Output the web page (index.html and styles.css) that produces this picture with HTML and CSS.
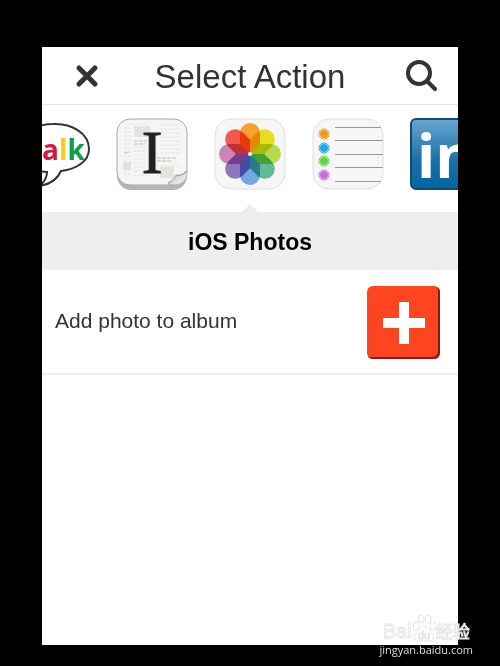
FILE: index.html
```html
<!DOCTYPE html>
<html lang="en">
<head>
    <meta charset="UTF-8">
    <meta name="viewport" content="width=device-width, initial-scale=1.0">
    <title>Select Action</title>
    <link rel="stylesheet" href="styles.css">
</head>
<body>

    <main class="screen">
        <header class="topbar">
            <button class="icon-btn" aria-label="Close">
                <svg width="24" height="24" viewBox="0 0 24 24" fill="none" stroke="#333" stroke-width="5" stroke-linecap="round">
                    <path d="M4 4L20 20M20 4L4 20"/>
                </svg>
            </button>
            <h1>Select Action</h1>
            <button class="icon-btn search" aria-label="Search">
                <svg width="32" height="32" viewBox="0 0 32 32" fill="none" stroke="#333" stroke-width="4">
                    <circle cx="13" cy="13" r="11"/>
                    <path d="M21 21L29 29" stroke-linecap="round"/>
                </svg>
            </button>
        </header>

        <nav class="channels">
            <button class="channel" aria-label="Google Talk">
                <svg viewBox="0 0 72 72">
                    <path d="M35 6C53 5 71 15 71 31C71 43 59 51 43 53C40 60 33 66 22 68C27 63 29 59 29 54C12 53 1 44 1 31C1 16 17 6 35 6Z" fill="#fff" stroke="#333" stroke-width="2"/>
                    <text class="talk-text" x="24" y="42"><tspan fill="#d9183f">a</tspan><tspan fill="#f6cf13">l</tspan><tspan fill="#0da04b">k</tspan></text>
                </svg>
            </button>
            <button class="channel" aria-label="Instapaper">
                <svg viewBox="0 0 72 72">
                    <defs>
                        <linearGradient id="curl" x1="0" y1="0" x2="1" y2="1">
                            <stop offset="0" stop-color="#fff"/>
                            <stop offset=".5" stop-color="#dededa"/>
                            <stop offset="1" stop-color="#fafafa"/>
                        </linearGradient>
                    </defs>
                    <rect x="1" y="2" width="70" height="70" rx="14" fill="#b5b5b2"/>
                    <rect x="1" y="1" width="70" height="66" rx="13" fill="#f5f5f3" stroke="#aaa"/>
                    <g stroke="#e4e4e1" stroke-dasharray="3 1">
                        <path d="M12 6H32M8 10H15M8 14H15M8 18H15M8 22H15M8 26H15M8 30H15M8 34H15M8 38H15M8 42H15M8 48H15M8 52H15M8 56H15"/>
                        <path d="M44 7H65M44 11H65M44 15H65M44 19H65M44 23H65M44 27H65M44 31H65M44 35H65"/>
                        <path d="M18 29H29M18 33H29M18 37H29M18 41H29M18 45H29M18 49H29M18 53H29M18 57H29M44 48H65M44 52H56"/>
                    </g>
                    <path d="M18 8H34V19H18ZM7 44H15V52H7ZM44 49H58V60H44Z" fill="#e3e3e0"/>
                    <path d="M18 23H31M18 26H29M41 40H60M41 43H56M8 35H14" stroke="#bbb" stroke-dasharray="4 1"/>
                    <text class="paper-text" x="36" y="55">I</text>
                    <path d="M52 66C58 63 60 60 60 58C64 58 69 56 71 53C71 62 67 66 59 67Z" fill="url(#curl)" stroke="#bbb"/>
                    <path d="M52 65C57 62 59 59 60 57C64 58 68 56 70 53" fill="none" stroke="#999"/>
                </svg>
            </button>
            <button class="channel selected" aria-label="iOS Photos">
                <svg viewBox="0 0 72 72">
                    <defs>
                        <path id="petal" d="M26 15A10 10 0 0 1 46 15V26L36 36L26 26Z"/>
                    </defs>
                    <rect x="1" y="1" width="70" height="70" rx="16" fill="#f6f6f6" stroke="#e0e0e0"/>
                    <g class="petals">
                        <use href="#petal" fill="#f8a030"/>
                        <use href="#petal" fill="#e9dc20" transform="rotate(45 36 36)"/>
                        <use href="#petal" fill="#b7da50" transform="rotate(90 36 36)"/>
                        <use href="#petal" fill="#60bb9c" transform="rotate(135 36 36)"/>
                        <use href="#petal" fill="#72a8e2" transform="rotate(180 36 36)"/>
                        <use href="#petal" fill="#9274be" transform="rotate(225 36 36)"/>
                        <use href="#petal" fill="#cc83b8" transform="rotate(270 36 36)"/>
                        <use href="#petal" fill="#f25a4c" transform="rotate(315 36 36)"/>
                    </g>
                    <circle cx="36" cy="36" r="2" fill="#fff"/>
                </svg>
            </button>
            <button class="channel" aria-label="iOS Reminders">
                <svg viewBox="0 0 72 72">
                    <rect x="1" y="1" width="70" height="70" rx="16" fill="#f6f6f6" stroke="#e0e0e0"/>
                    <path d="M23 9.500H69M23 22.500H71M23 36.500H71M23 49.500H71M23 63.500H69" stroke="#999"/>
                    <g fill="#fff" stroke-width="1">
                        <circle cx="12" cy="16" r="5" stroke="#f09a1c"/>
                        <circle cx="12" cy="30" r="5" stroke="#22a6e8"/>
                        <circle cx="12" cy="43" r="5" stroke="#5fd642"/>
                        <circle cx="12" cy="57" r="5" stroke="#c66ade"/>
                    </g>
                    <circle cx="12" cy="16" r="4" fill="#f09a1c"/>
                    <circle cx="12" cy="30" r="4" fill="#22a6e8"/>
                    <circle cx="12" cy="43" r="4" fill="#5fd642"/>
                    <circle cx="12" cy="57" r="4" fill="#c66ade"/>
                </svg>
            </button>
            <button class="channel" aria-label="LinkedIn">
                <svg viewBox="0 0 72 72">
                    <defs>
                        <linearGradient id="blue" x1="0" y1="0" x2="0" y2="1">
                            <stop offset="0" stop-color="#6aa5cf"/>
                            <stop offset=".6" stop-color="#1a70a8"/>
                            <stop offset="1" stop-color="#0364a0"/>
                        </linearGradient>
                    </defs>
                    <rect x="1" y="1" width="70" height="70" rx="5" fill="url(#blue)" stroke="#0b4f74" stroke-width="2"/>
                    <text class="linked-text" x="7" y="60">in</text>
                </svg>
            </button>
        </nav>

        <h2>iOS Photos</h2>

        <ul class="actions">
            <li>
                <label for="add">Add photo to album</label>
                <button class="add-btn" id="add" aria-label="Add photo to album">
                    <svg width="42" height="42" viewBox="0 0 42 42" fill="#fff">
                        <path d="M16 0H26V16H42V26H26V42H16V26H0V16H16Z"/>
                    </svg>
                </button>
            </li>
        </ul>
    </main>

    <div class="watermark">
        <div class="brand">
            <span>Bai</span>
            <svg width="24" height="28" viewBox="0 0 24 28" fill="#fff" stroke="#e6e6e6">
                <ellipse cx="4" cy="12" rx="3" ry="4"/>
                <ellipse cx="9" cy="5" rx="3" ry="4"/>
                <ellipse cx="16" cy="5" rx="3" ry="4"/>
                <ellipse cx="21" cy="12" rx="3" ry="4"/>
                <path d="M12 12C16 12 17 16 20 19C24 23 21 28 17 27C14 26 10 26 7 27C3 28 0 23 4 19C7 16 8 12 12 12Z"/>
                <text class="paw-text" x="12" y="25">du</text>
            </svg>
            <span class="cn">经验</span>
        </div>
        <p>jingyan.baidu.com</p>
    </div>

</body>
</html>
```

FILE: styles.css
```css
* {
    box-sizing: border-box;
    margin: 0;
    padding: 0;
}
body {
    display: flex;
    min-height: 100vh;
    padding: 47px 42px 21px;
    background-color: #000;
    font-family: "Liberation Sans", Arial, sans-serif;
    color: #333;
}
button {
    border: none;
    background: none;
    cursor: pointer;
}
svg {
    display: block;
}
.screen {
    flex: 1;
    min-width: 0;
    background-color: #fff;
}
.topbar {
    display: grid;
    grid-template-columns: 50px 1fr 50px;
    align-items: center;
    height: 58px;
    padding: 0 20px;
    border-bottom: 1px solid #e8e8e8;
}
.topbar h1 {
    padding-top: 2px;
    font-size: 33px;
    font-weight: normal;
    line-height: 40px;
    text-align: center;
    white-space: nowrap;
}
.icon-btn {
    display: flex;
    justify-content: center;
}
.icon-btn.search {
    justify-content: flex-end;
}
.channels {
    display: flex;
    justify-content: center;
    gap: 26px;
    padding: 13px 0 22px;
    overflow: hidden;
}
.channel {
    position: relative;
    flex: none;
    width: 72px;
    height: 72px;
}
.channel.selected::after {
    content: "";
    position: absolute;
    left: 50%;
    top: 100%;
    margin: 14px 0 0 -8px;
    border: 8px solid transparent;
    border-top: none;
    border-bottom-color: #eee;
}
.talk-text {
    font: bold 28px "Open Sans", sans-serif;
}
.paper-text {
    font: 62px "Liberation Serif", serif;
    text-anchor: middle;
    fill: #222;
    stroke: #222;
}
.linked-text {
    font: bold 60px "Open Sans", sans-serif;
    fill: #fff;
}
.petals {
    isolation: isolate;
}
.petals use {
    mix-blend-mode: multiply;
}
h2 {
    padding: 16px 0 14px;
    background-color: #eee;
    color: #000;
    font-size: 23px;
    line-height: 28px;
    text-align: center;
}
.actions {
    list-style: none;
}
.actions li {
    display: flex;
    align-items: center;
    justify-content: space-between;
    padding: 16px 18px 14px 13px;
    border-bottom: 2px solid #eee;
}
.actions label {
    padding-bottom: 4px;
    font-size: 21px;
    line-height: 26px;
}
.add-btn {
    display: grid;
    place-items: center;
    width: 73px;
    height: 73px;
    border-radius: 6px;
    background-color: #ff4422;
    box-shadow: inset -2px -2px 0 #8c1c10;
}
.watermark {
    position: absolute;
    right: 27px;
    bottom: 8px;
    color: #ddd;
}
.watermark p {
    font: 11px/16px "Open Sans", sans-serif;
    text-align: center;
}
.brand {
    display: flex;
    align-items: flex-end;
    justify-content: center;
    color: #fff;
    font-size: 20px;
    line-height: 22px;
    -webkit-text-stroke: 1px #e6e6e6;
}
.brand .cn {
    font-family: "Noto Sans CJK SC", sans-serif;
    font-size: 17px;
}
.paw-text {
    font-size: 11px;
    text-anchor: middle;
}
```
